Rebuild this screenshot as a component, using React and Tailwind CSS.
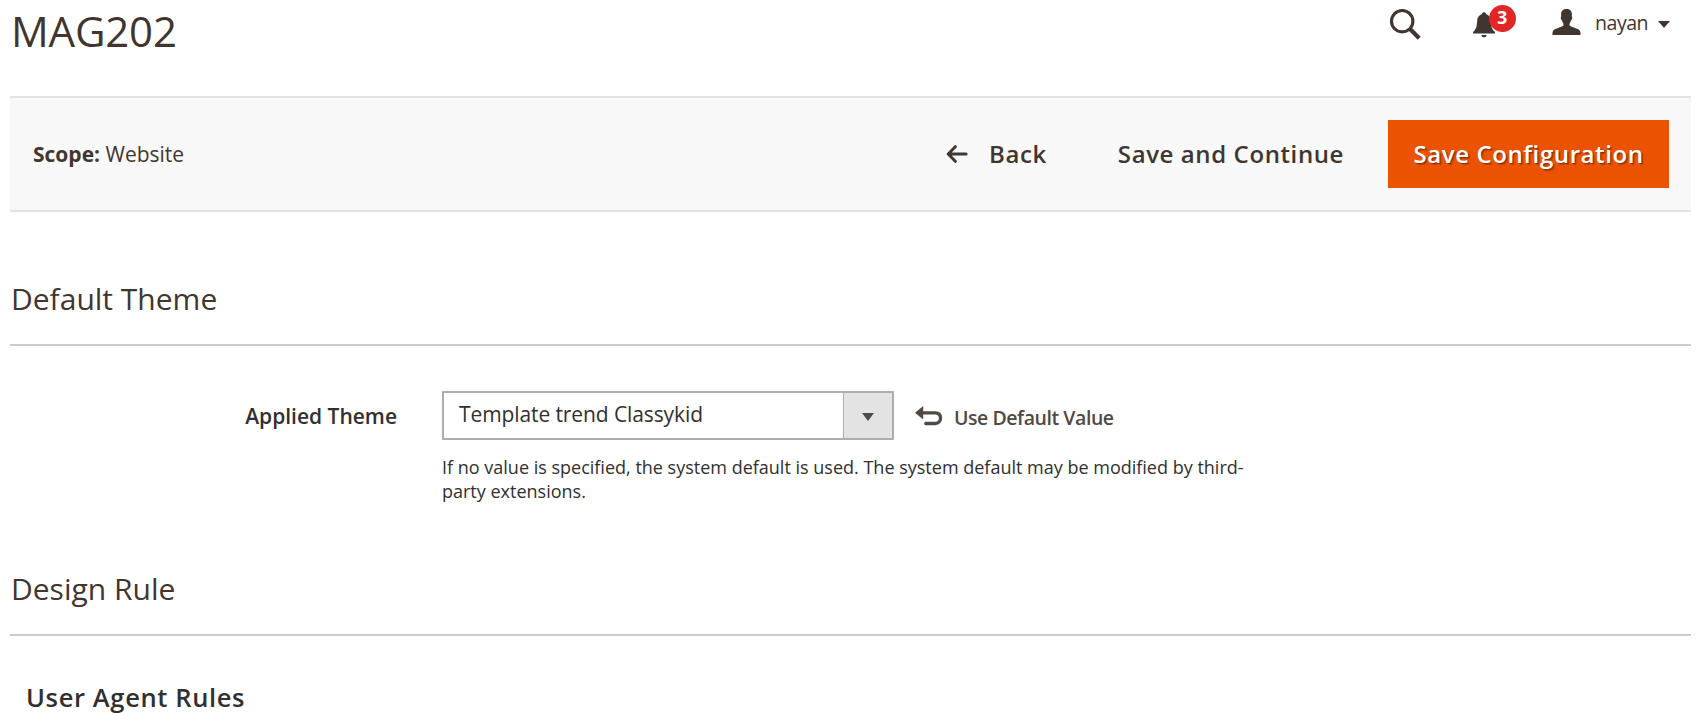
function SearchIcon() {
  return (
    <svg className="h-8 w-8" viewBox="0 0 32 32" fill="none" stroke="#41362f">
      <circle cx="13.2" cy="13.2" r="10.7" strokeWidth="3.1" />
      <path d="M20.8 20.8 30.2 30.2" strokeWidth="4.2" />
    </svg>
  );
}

function BellIcon() {
  return (
    <svg className="h-[26px] w-6" viewBox="0 0 24 26" fill="#41362f">
      <path d="M12 .3c1.2 0 1.9.7 1.9 1.6 3 .9 4.8 3.3 5 7 .2 5.7 1 8.3 4.1 11.1v1.400H1v-1.400c3.100-2.800 3.900-5.400 4.100-11.100.2-3.700 2-6.100 5-7 0-.9.700-1.600 1.900-1.600z" />
      <path d="M9.300 23h5.400c-.3 1.500-1.300 2.300-2.700 2.300S9.600 24.500 9.300 23z" />
    </svg>
  );
}

function UserIcon() {
  return (
    <svg className="h-[26px] w-[29px]" viewBox="0 0 29 26" fill="#41362f">
      <path d="M14.500 0c3.500 0 5.400 2 5.400 5.200 0 .9-.1 1.700-.2 2.300.7.200.7 1.200.4 2.300-.2.900-.6 1.500-1.100 1.600-.3 1.500-1.300 2.700-1.500 3.600-.2 1.200.4 2 1.600 2.500l5.900 2.200c2.600 1 3.500 2.200 3.500 4.600V26H.5v-1.700c0-2.400.9-3.600 3.500-4.600l5.900-2.200c1.200-.5 1.800-1.300 1.600-2.500-.2-.9-1.200-2.100-1.500-3.600-.5-.1-.9-.7-1.100-1.600-.3-1.100-.3-2.100.4-2.300-.1-.6-.2-1.400-.2-2.300C9.100 2 11 0 14.500 0z" />
    </svg>
  );
}

function Caret({ className }) {
  return (
    <svg className={className} viewBox="0 0 12 8" preserveAspectRatio="none" fill="currentColor">
      <path d="M0 0h12L6 8z" />
    </svg>
  );
}

function BackArrow() {
  return (
    <svg className="h-[18px] w-[22px]" viewBox="0 0 22 18" fill="none" stroke="#41362f" strokeWidth="3" strokeLinecap="round" strokeLinejoin="round">
      <path d="M9.300 1.700 2.200 9l7.100 7.300M2.500 9h17.600" />
    </svg>
  );
}

function UndoIcon() {
  return (
    <svg className="h-5 w-7" viewBox="0 0 28 20">
      <path d="M0 6.800 8.200 0v13.600z" fill="#514943" />
      <path d="M7 6.800h13.200c3.300 0 5.300 1.900 5.300 5.200s-2 5.500-5.300 5.500h-9.400" fill="none" stroke="#514943" strokeWidth="3.300" strokeLinecap="round" />
    </svg>
  );
}

function SectionTitle({ children }) {
  return (
    <div className="flex h-[68px] flex-col justify-between">
      <h2 className="pl-px text-[30px] leading-[41px]">{children}</h2>
      <hr className="border-t-2 border-[#cccccc]" />
    </div>
  );
}

export default function App() {
  return (
    <div className="h-[713px] overflow-hidden bg-white pr-[15px] pl-2.5 font-['Open_Sans',sans-serif] text-[21px] text-[#41362f]">
      <header className="flex h-24 items-start justify-between">
        <h1 className="pl-px text-[42px] leading-[61px] tracking-[-0.2px]">MAG202</h1>
        <div className="flex h-[43px] items-center pr-[21px]">
          <button className="mt-[4px] mr-[51px]" aria-label="Search"><SearchIcon /></button>
          <button className="relative mt-[6px] mr-[56px]" aria-label="Notifications">
            <BellIcon />
            <span className="absolute -top-[7px] left-[17px] flex h-[27px] w-[27px] items-center justify-center rounded-full bg-[#e22626] text-[18px] leading-none font-bold text-white">
              <span className="-mt-[3px] -ml-px">3</span>
            </span>
          </button>
          <UserIcon />
          <span className="mt-0.5 ml-[14px] text-[19.5px] tracking-[-0.025em]">nayan</span>
          <Caret className="mt-[6px] ml-[10px] h-[7px] w-[12px]" />
        </div>
      </header>

      <div className="flex h-[116px] items-center justify-between border-y-2 border-[#e3e3e3] bg-[#f8f8f8] pr-[22px] pl-[23px]">
        <p className="mt-0.5"><strong className="font-bold">Scope:</strong> Website</p>
        <div className="flex items-center text-[24px] font-semibold tracking-[0.025em]">
          <button className="flex items-center gap-[21px]"><BackArrow />Back</button>
          <button className="ml-[71px]">Save and Continue</button>
          <button className="ml-[44px] h-[68px] w-[281px] bg-[#eb5202] text-white [text-shadow:1px_1px_0_rgba(0,0,0,0.25),2px_2px_1px_rgba(0,0,0,0.2)]">
            Save Configuration
          </button>
        </div>
      </div>

      <section className="pt-[66px]">
        <SectionTitle>Default Theme</SectionTitle>
        <div className="flex pt-[45px] text-[#303030]">
          <div className="mr-[45px] w-[387px] text-right leading-[50px] font-semibold">Applied Theme</div>
          <div>
            <div className="flex h-[49px] items-center">
              <div className="flex h-[49px] w-[452px] rounded-[1px] border-2 border-[#adadad]">
                <span className="flex-1 pl-[15px] leading-[43px] tracking-[-0.1px]">Template trend Classykid</span>
                <span className="flex w-[49px] items-center justify-center border-l border-[#adadad] bg-[#e3e3e3] text-[#514943]">
                  <Caret className="mt-0.5 h-2 w-3" />
                </span>
              </div>
              <div className="ml-[21px] flex items-center text-[#514943]">
                <UndoIcon />
                <span className="mt-[4px] ml-[11px] text-[19.5px] font-semibold tracking-[-0.45px]">Use Default Value</span>
              </div>
            </div>
            <p className="mt-[15px] w-[810px] text-[18px] leading-6">
              If no value is specified, the system default is used. The system default may be modified by third-party extensions.
            </p>
          </div>
        </div>
      </section>

      <section className="pt-[65px]">
        <SectionTitle>Design Rule</SectionTitle>
        <h3 className="pt-[43px] pl-4 text-[25.5px] leading-9 font-semibold tracking-[0.025em] text-[#303030]">User Agent Rules</h3>
      </section>
    </div>
  );
}
